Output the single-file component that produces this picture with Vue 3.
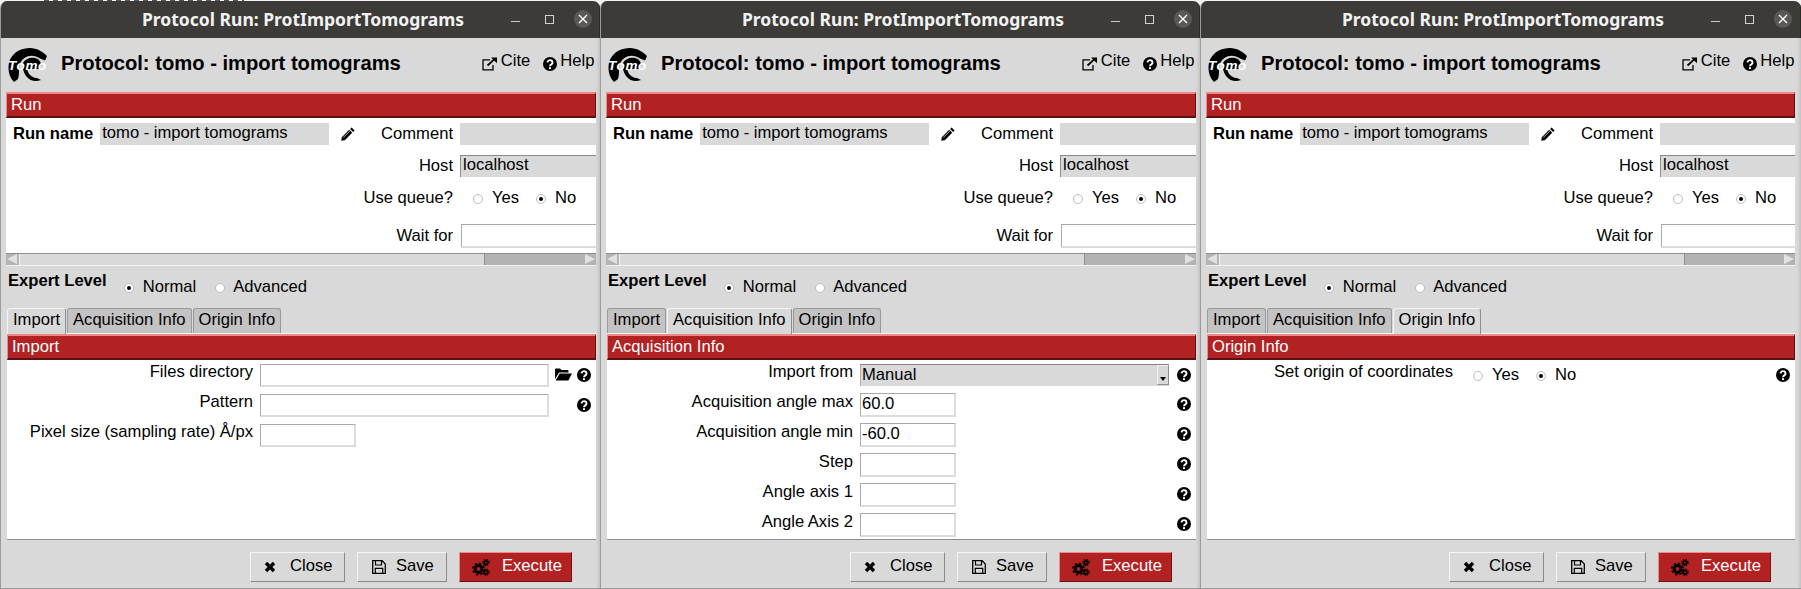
<script setup>
const windows = [
  { id: 'import', tab: 'Import' },
  { id: 'acq', tab: 'Acquisition Info' },
  { id: 'origin', tab: 'Origin Info' }
]
const tabs = ['Import', 'Acquisition Info', 'Origin Info']

const acqRows = [
  { label: 'Acquisition angle max', value: '60.0' },
  { label: 'Acquisition angle min', value: '-60.0' },
  { label: 'Step', value: '' },
  { label: 'Angle axis 1', value: '' },
  { label: 'Angle Axis 2', value: '' }
]
</script>

<template>
  <div class="desk">
    <svg class="defs" aria-hidden="true">
      <symbol id="i-help" viewBox="0 0 14 14">
        <circle cx="7" cy="7" r="7" fill="#000" />
        <path d="M4.500 5.400a2.500 2.300 0 1 1 4 1.900c-1 .7-1.500 1-1.500 2" fill="none" stroke="#fff" stroke-width="1.900" />
        <rect x="6" y="10.200" width="2" height="1.900" fill="#fff" />
      </symbol>
      <symbol id="i-pencil" viewBox="0 0 14 14">
        <path d="M10.600.4l3 3-1.500 1.500-3-3zM8.200 2.800l3 3-7.400 7.400L.2 13.800l.6-3.600z" fill="#000" />
        <path d="M2.400 10.400l6.400-6.400" stroke="#fff" stroke-width=".7" />
      </symbol>
      <symbol id="i-folder" viewBox="0 0 17 13">
        <path d="M0 11V1.500Q0 .5 1 .5h4L6.500 2h6q1 0 1 1v1.500H4z" fill="#000" />
        <path d="M4.600 5.500H17l-3.600 7H.6z" fill="#000" />
      </symbol>
      <symbol id="i-link" viewBox="0 0 16 14">
        <path d="M8 2.800H1v10h10V8" fill="none" stroke="#000" stroke-width="1.300" />
        <path d="M5.500 8.500L13 1.600" fill="none" stroke="#000" stroke-width="1.700" />
        <path d="M9 .6h6v5.600z" fill="#000" />
      </symbol>
      <symbol id="i-close" viewBox="0 0 12 12">
        <path d="M2 2l8 8M10 2l-8 8" fill="none" stroke="#000" stroke-width="3.400" />
      </symbol>
      <symbol id="i-save" viewBox="0 0 14 14">
        <path d="M.7.7h9.400l3.200 3.200v9.400H.7z" fill="none" stroke="#000" stroke-width="1.300" />
        <path d="M3.500 1v4h6V1M3.300 13V8.400h7.400V13" fill="none" stroke="#000" stroke-width="1.200" />
      </symbol>
      <symbol id="i-gears" viewBox="0 0 18 17">
        <circle cx="6.500" cy="10" r="3.400" fill="none" stroke="#000" stroke-width="3" />
        <circle cx="6.500" cy="10" r="5.700" fill="none" stroke="#000" stroke-width="1.600" stroke-dasharray="2.300 2.180" />
        <circle cx="14" cy="3.600" r="1.700" fill="none" stroke="#000" stroke-width="1.700" />
        <circle cx="14" cy="3.600" r="3.100" fill="none" stroke="#000" stroke-width="1.300" stroke-dasharray="1.300 1.140" />
        <circle cx="14" cy="13.200" r="1.700" fill="none" stroke="#000" stroke-width="1.700" />
        <circle cx="14" cy="13.200" r="3.100" fill="none" stroke="#000" stroke-width="1.300" stroke-dasharray="1.300 1.140" />
      </symbol>
    </svg>

    <section v-for="w in windows" :key="w.id" class="win" :class="w.id">
      <header class="titlebar">
        <span class="title">Protocol Run: ProtImportTomograms</span>
        <i class="ctl-min"></i>
        <i class="ctl-max"></i>
        <i class="ctl-close">
          <svg width="10" height="10" viewBox="0 0 10 10"><path d="M1 1l8 8M9 1L1 9" stroke="#fff" stroke-width="1.400" /></svg>
        </i>
      </header>

      <div class="body">
        <div class="proto-head">
          <svg class="logo" width="40" height="35" viewBox="0 0 40 35">
            <path d="M6 34C1 29-.4 22 1 15 3 6 11 .4 21 0c7-.2 13 3 18 8l-2 4.500-5-2C27 7 21 7 16.500 10 13 12.500 11 16 11 20c0 5 0 8-1 11z" fill="#000" />
            <path d="M15 15c2-4 7-6 12-5 4 1 6 4 6 7l-2 4H19l1 3c2 4 6 6 9 6l4 2c-5 2-11 1-14-3-3-3-5-9-4-14z" fill="#000" />
            <text x="0" y="22" class="logo-text">Tomo</text>
          </svg>
          <h1 class="proto-title">Protocol: tomo - import tomograms</h1>
          <span class="head-link"><svg width="16" height="14"><use href="#i-link" /></svg>Cite</span>
          <span class="head-link help-link"><svg width="14" height="14"><use href="#i-help" /></svg>Help</span>
        </div>

        <div class="bar">Run</div>

        <div class="run-panel">
          <div class="run-left">
            <b class="run-label">Run name</b>
            <span class="flat-entry run-entry">tomo - import tomograms</span>
            <svg class="pencil" width="14" height="14"><use href="#i-pencil" /></svg>
            <span class="comment">Comment</span>
          </div>
          <span class="flat-entry"></span>

          <label class="run-cap">Host</label>
          <span class="flat-entry host-entry">localhost</span>

          <label class="run-cap">Use queue?</label>
          <div class="radio-pair">
            <i class="radio"></i><span class="yes">Yes</span>
            <i class="radio on"></i><span>No</span>
          </div>

          <label class="run-cap wait">Wait for</label>
          <span class="entry wait-entry"></span>
        </div>

        <div class="hscroll">
          <i class="arrow left"></i>
          <i class="thumb"></i>
          <i class="trough"></i>
          <i class="arrow right"></i>
        </div>

        <div class="expert">
          <b>Expert Level</b>
          <i class="radio on"></i><span class="opt">Normal</span>
          <i class="radio"></i><span class="adv">Advanced</span>
        </div>

        <div class="tabs">
          <span v-for="t in tabs" :key="t" class="tab" :class="{ active: t === w.tab }">{{ t }}</span>
        </div>

        <div class="tab-panel">
          <div class="bar sub-bar">{{ w.tab }}</div>
          <div class="form">
            <template v-if="w.id === 'import'">
              <div class="row">
                <label>Files directory</label>
                <span class="entry wide"></span>
                <svg class="folder" width="17" height="13"><use href="#i-folder" /></svg>
                <svg class="qm" width="14" height="14"><use href="#i-help" /></svg>
              </div>
              <div class="row">
                <label>Pattern</label>
                <span class="entry wide"></span>
                <svg class="qm push" width="14" height="14"><use href="#i-help" /></svg>
              </div>
              <div class="row">
                <label>Pixel size (sampling rate) Å/px</label>
                <span class="entry"></span>
              </div>
            </template>

            <template v-else-if="w.id === 'acq'">
              <div class="row first">
                <label>Import from</label>
                <div class="combo">
                  <span>Manual</span>
                  <i class="combo-btn"></i>
                </div>
                <svg class="qm push" width="14" height="14"><use href="#i-help" /></svg>
              </div>
              <div v-for="r in acqRows" :key="r.label" class="row angle">
                <label>{{ r.label }}</label>
                <span class="entry tall">{{ r.value }}</span>
                <svg class="qm push" width="14" height="14"><use href="#i-help" /></svg>
              </div>
            </template>

            <template v-else>
              <div class="row">
                <label>Set origin of coordinates</label>
                <div class="radio-pair origin">
                  <i class="radio"></i><span class="yes">Yes</span>
                  <i class="radio on"></i><span>No</span>
                </div>
                <svg class="qm push" width="14" height="14"><use href="#i-help" /></svg>
              </div>
            </template>
          </div>
        </div>

        <footer class="actions">
          <button class="btn close"><svg width="12" height="12"><use href="#i-close" /></svg><span>Close</span></button>
          <button class="btn save"><svg width="14" height="14"><use href="#i-save" /></svg><span>Save</span></button>
          <button class="btn exec"><svg width="18" height="17"><use href="#i-gears" /></svg><span>Execute</span></button>
        </footer>
      </div>
    </section>
  </div>
</template>

<style scoped>
.desk {
  position: relative;
  display: flex;
  align-items: flex-end;
  width: 1801px;
  height: 589px;
  overflow: hidden;
  background: #f4f4f4;
  font-family: "Liberation Sans", Arial, sans-serif;
  font-size: 16.600px;
  color: #000;
}

/* text of the window behind, only its bottom edge shows above the title bars */
.desk::before {
  content: "";
  position: absolute;
  top: 0;
  left: 44px;
  width: 200px;
  height: 1px;
  background: repeating-linear-gradient(to right, #555 0 5px, transparent 5px 9px);
}

.defs {
  position: absolute;
  width: 0;
  height: 0;
}

.win {
  position: relative;
  flex: none;
  width: 600px;
  height: 588px;
  box-sizing: border-box;
  display: flex;
  flex-direction: column;
  background: #d9d9d9;
  border-left: 1px solid #9c9c9c;
  border-bottom: 1px solid #9c9c9c;
  border-radius: 7px 7px 0 0;
  overflow: hidden;
}

.win.origin {
  width: 601px;
}

.win.origin .body {
  padding-right: 5px;
}

.win::after {
  content: "";
  position: absolute;
  top: 37px;
  right: 0;
  bottom: 0;
  width: 4px;
  background: linear-gradient(to right, rgba(0, 0, 0, 0), rgba(0, 0, 0, 0.1));
}

/* title bar */
.titlebar {
  position: relative;
  flex: none;
  height: 37px;
  box-sizing: border-box;
  padding-left: 141px;
  padding-top: 6px;
  background: #3c3b38;
  color: #f2f2f2;
  border-right: 1px solid #2a2a2a;
}

.title {
  font-family: "Noto Sans", sans-serif;
  font-weight: 700;
  font-size: 17.500px;
  line-height: 24px;
  display: block;
  white-space: nowrap;
}

.ctl-min {
  position: absolute;
  left: 510px;
  top: 20px;
  width: 9px;
  height: 1px;
  background: #c9c9c9;
}

.ctl-max {
  position: absolute;
  left: 544px;
  top: 14px;
  width: 7px;
  height: 7px;
  border: 1px solid #d0d0d0;
}

.ctl-close {
  position: absolute;
  left: 573px;
  top: 9px;
  width: 18px;
  height: 18px;
  border-radius: 50%;
  background: #5a5955;
  display: flex;
  align-items: center;
  justify-content: center;
}

.body {
  flex: 1;
  display: flex;
  flex-direction: column;
  padding-left: 5px;
  padding-right: 3px;
}

/* protocol header */
.proto-head {
  flex: none;
  height: 54px;
  display: flex;
  align-items: center;
}

.logo {
  flex: none;
  margin-left: 2px;
  margin-top: 1px;
}

.logo-text {
  font-family: "Liberation Sans", sans-serif;
  font-weight: 700;
  font-style: italic;
  font-size: 13.500px;
  letter-spacing: 0.700px;
  fill: #fff;
}

.proto-title {
  margin: -5px 0 0 13px;
  font-size: 20.200px;
  font-weight: 700;
  line-height: 24px;
  flex: none;
  white-space: nowrap;
}

.head-link {
  display: flex;
  align-items: center;
  line-height: 18px;
  margin-left: 81px;
  margin-top: -9px;
}

.head-link svg {
  margin-top: 6px;
  margin-right: 3px;
}

.help-link {
  margin-left: 13px;
}

/* red bars */
.bar {
  flex: none;
  height: 26px;
  box-sizing: border-box;
  padding-left: 4px;
  line-height: 22px;
  background: #b22222;
  color: #fff;
  border: 2px solid;
  border-color: #f08a8a #5c1010 #5c1010 #f08a8a;
  border-width: 2px 1px 2px 1px;
  margin-right: 1px;
}

/* run parameters */
.run-panel {
  flex: none;
  height: 135px;
  box-sizing: border-box;
  padding-top: 5px;
  margin-right: 1px;
  background: #fff;
  display: grid;
  grid-template-columns: 447px 1fr;
  grid-auto-rows: 22px;
  column-gap: 7px;
  row-gap: 10px;
  overflow: hidden;
}

.run-left {
  display: flex;
  align-items: center;
}

.run-label {
  margin-left: 7px;
  font-weight: 700;
  white-space: nowrap;
}

.run-entry {
  margin-left: 7px;
  width: 229px;
  flex: none;
}

.pencil {
  margin-left: 12px;
  flex: none;
}

.comment {
  margin-left: auto;
}

.flat-entry {
  display: block;
  height: 22px;
  line-height: 20px;
  box-sizing: border-box;
  padding-left: 2px;
  background: #d9d9d9;
  white-space: nowrap;
}

.host-entry {
  border-top: 1px solid #8c8c8c;
  border-left: 1px solid #8c8c8c;
  line-height: 18px;
}

.run-cap {
  text-align: right;
  line-height: 22px;
}

.radio-pair {
  display: flex;
  align-items: center;
  line-height: 22px;
  padding-left: 13px;
}

.yes {
  margin-right: 17px;
}

.radio {
  flex: none;
  width: 10px;
  height: 10px;
  box-sizing: border-box;
  border: 1px solid #bdbdbd;
  border-radius: 50%;
  background: #fff;
  margin-right: 9px;
  margin-top: 2px;
  display: flex;
  align-items: center;
  justify-content: center;
}

.radio.on::before {
  content: "";
  width: 4px;
  height: 4px;
  border-radius: 50%;
  background: #000;
}

.wait {
  margin-top: 7px;
  line-height: 20px;
}

.entry {
  display: block;
  flex: none;
  width: 96px;
  height: 23px;
  box-sizing: border-box;
  line-height: 19px;
  padding-left: 1px;
  background: #fff;
  border: 2px solid #dcdcdc;
  border-top-color: #a8a8a8;
  border-left-color: #a8a8a8;
  border-width: 1px 2px 2px 1px;
}

.entry.wide {
  width: 289px;
}

.entry.tall {
  height: 24px;
}

.entry.wait-entry {
  margin-top: 5px;
  margin-left: 1px;
  margin-right: -6px;
  width: auto;
  height: 24px;
}

/* scrollbar */
.hscroll {
  flex: none;
  height: 13px;
  box-sizing: border-box;
  display: flex;
  margin-right: 1px;
  background: #b3b3b3;
  border-top: 1px solid #8e8e8e;
  border-bottom: 1px solid #f4f4f4;
}

.arrow {
  flex: none;
  width: 13px;
  position: relative;
}

.arrow::before {
  content: "";
  position: absolute;
  top: 0;
  left: 1px;
  border-style: solid;
  border-width: 5.500px 10px 5.500px 0;
  border-color: transparent #e2e2e2 transparent transparent;
}

.arrow.right::before {
  left: 2px;
  border-width: 5.500px 0 5.500px 10px;
  border-color: transparent transparent transparent #e2e2e2;
}

.thumb {
  flex: none;
  width: 466px;
  background: #d9d9d9;
  border-right: 1px solid #8e8e8e;
  border-left: 1px solid #f1f1f1;
  box-sizing: border-box;
}

.trough {
  flex: 1;
}

/* expert level */
.expert {
  flex: none;
  height: 42px;
  box-sizing: border-box;
  display: flex;
  align-items: center;
  padding-left: 2px;
}

.expert b {
  margin-bottom: 12px;
  margin-right: 17px;
  white-space: nowrap;
}

.expert .opt {
  margin-right: 19px;
}

.expert .adv {
  margin-left: -1px;
}

/* tabs */
.tabs {
  flex: none;
  height: 25px;
  display: flex;
  gap: 1px;
  padding-left: 1px;
}

.tab {
  box-sizing: border-box;
  height: 25px;
  padding: 1px 5px 0;
  line-height: 20px;
  background: #c3c3c3;
  border: 1px solid #9a9a9a;
  border-bottom: none;
  border-radius: 3px 3px 0 0;
  white-space: nowrap;
}

.tab.active {
  background: #d9d9d9;
  border-color: #f4f4f4 #8e8e8e #d9d9d9 #f4f4f4;
  height: 26px;
  position: relative;
}

.tab-panel {
  flex: none;
  height: 207px;
  box-sizing: border-box;
  margin-left: 1px;
  margin-right: 1px;
  border-top: 1px solid #f4f4f4;
  background: #fff;
  border-bottom: 1px solid #8e8e8e;
  display: flex;
  flex-direction: column;
}

.sub-bar {
  margin-right: 0;
}

/* tab forms */
.form {
  flex: 1;
  display: flex;
  flex-direction: column;
  padding-top: 4px;
  padding-right: 5px;
  row-gap: 7px;
}

.row {
  display: flex;
  align-items: flex-start;
  height: 23px;
}

.row.first {
  height: 22px;
}

.row label {
  flex: none;
  width: 246px;
  margin-right: 7px;
  text-align: right;
  line-height: 16px;
  white-space: nowrap;
}

.row.angle label {
  line-height: 18px;
}

.folder {
  flex: none;
  margin-left: 6px;
  margin-top: 4px;
}

.qm {
  flex: none;
  margin-left: 5px;
  margin-top: 4px;
}

.qm.push {
  margin-left: auto;
}

.combo {
  flex: none;
  width: 309px;
  height: 22px;
  box-sizing: border-box;
  background: #d9d9d9;
  border-top: 1px solid #808080;
  border-left: 1px solid #b0b0b0;
  display: flex;
  justify-content: space-between;
  padding-left: 1px;
  line-height: 20px;
}

.combo-btn {
  flex: none;
  width: 12px;
  height: 20px;
  box-sizing: border-box;
  border: 1px solid #8e8e8e;
  border-top-color: #f1f1f1;
  border-left-color: #f1f1f1;
  position: relative;
}

.combo-btn::before {
  content: "";
  position: absolute;
  left: 2px;
  bottom: 3px;
  border-style: solid;
  border-width: 4px 3px 0 3px;
  border-color: #000 transparent transparent;
}

.radio-pair.origin {
  padding-left: 13px;
}

/* bottom buttons */
.actions {
  flex: 1;
  display: flex;
  align-items: flex-start;
  justify-content: flex-end;
  padding-top: 12px;
  padding-right: 25px;
  gap: 12px;
}

.btn {
  display: flex;
  align-items: center;
  box-sizing: border-box;
  height: 30px;
  padding: 0;
  background: #d9d9d9;
  border: 1px solid;
  border-color: #f4f4f4 #8a8a8a #8a8a8a #f4f4f4;
  font: inherit;
  line-height: 24px;
  color: #000;
}

.btn span {
  margin-top: -2px;
}

.btn svg {
  flex: none;
}

.btn.close {
  width: 95px;
  padding-left: 13px;
}

.btn.close svg {
  margin-right: 14px;
}

.btn.save {
  width: 90px;
  padding-left: 14px;
}

.btn.save svg {
  margin-right: 10px;
}

.btn.exec {
  width: 113px;
  padding-left: 12px;
  background: #b22222;
  color: #fff;
  border-color: #f08a8a #6e1414 #6e1414 #f08a8a;
}

.btn.exec svg {
  margin-right: 12px;
}
</style>

<style>
body {
  margin: 0;
}
</style>
